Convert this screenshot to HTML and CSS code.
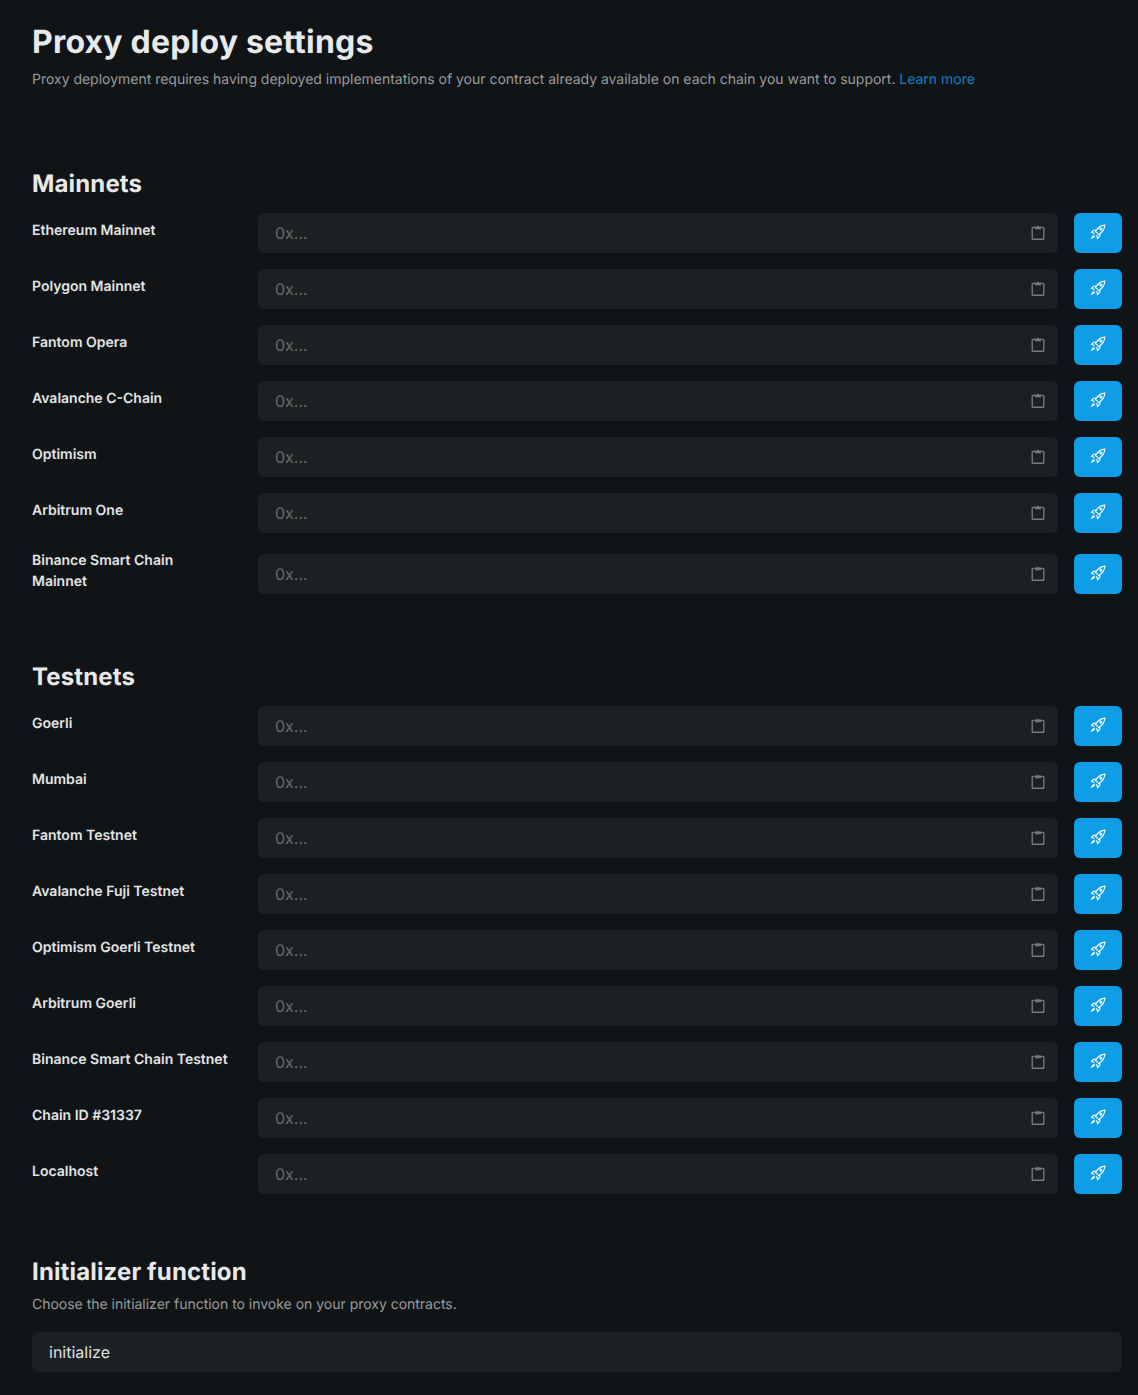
FILE: index.html
```html
<!DOCTYPE html>
<html lang="en">
<head>
<meta charset="utf-8">
<title>Proxy deploy settings</title>
<link rel="stylesheet" href="styles.css">
</head>
<body>
<svg class="defs" width="0" height="0" aria-hidden="true">
  <symbol id="clip" viewBox="0 0 16 16">
    <path d="M5 3.4H3a.8.8 0 0 0-.8.8v10.2a.8.8 0 0 0 .8.8h10a.8.8 0 0 0 .8-.8V4.2a.8.8 0 0 0-.8-.8h-2" fill="none" stroke="currentColor" stroke-width="1.4"/>
    <path d="M5 5.2V2.4h1.9a1.2 1.2 0 0 1 2.2 0H11v2.8z" fill="currentColor"/>
  </symbol>
  <symbol id="rocket" viewBox="0 0 16 16">
    <g fill="none" stroke="currentColor" stroke-width="1.1" stroke-linecap="round" stroke-linejoin="round">
      <path d="M14.9 1.1C11 1.4 8 3.4 5.4 7.2l3.4 3.4c3.8-2.6 5.8-5.6 6.1-9.5z"/>
      <path d="M6 6.2H3.6L1.4 8.4l3.1.9"/>
      <path d="M9.8 10v2.4l-2.2 2.2-.9-3.1"/>
      <path d="M3.6 11.4l-2 3 3-2z" fill="currentColor"/>
      <circle cx="10.8" cy="5.2" r=".9"/>
    </g>
  </symbol>
</svg>
<main class="page">
  <header class="intro">
    <h1 class="title">Proxy deploy settings</h1>
    <p class="note">Proxy deployment requires having deployed implementations of your contract already available on each chain you want to support. <a class="link" href="#">Learn more</a></p>
  </header>

  <section class="group group-main">
    <h2 class="heading">Mainnets</h2>
    <div class="rows">
      <div class="row"><label class="name">Ethereum Mainnet</label><div class="field"><input class="input" placeholder="0x..."><svg class="clip"><use href="#clip"/></svg></div><button class="deploy"><svg class="rocket"><use href="#rocket"/></svg></button></div>
      <div class="row"><label class="name">Polygon Mainnet</label><div class="field"><input class="input" placeholder="0x..."><svg class="clip"><use href="#clip"/></svg></div><button class="deploy"><svg class="rocket"><use href="#rocket"/></svg></button></div>
      <div class="row"><label class="name">Fantom Opera</label><div class="field"><input class="input" placeholder="0x..."><svg class="clip"><use href="#clip"/></svg></div><button class="deploy"><svg class="rocket"><use href="#rocket"/></svg></button></div>
      <div class="row"><label class="name">Avalanche C-Chain</label><div class="field"><input class="input" placeholder="0x..."><svg class="clip"><use href="#clip"/></svg></div><button class="deploy"><svg class="rocket"><use href="#rocket"/></svg></button></div>
      <div class="row"><label class="name">Optimism</label><div class="field"><input class="input" placeholder="0x..."><svg class="clip"><use href="#clip"/></svg></div><button class="deploy"><svg class="rocket"><use href="#rocket"/></svg></button></div>
      <div class="row"><label class="name">Arbitrum One</label><div class="field"><input class="input" placeholder="0x..."><svg class="clip"><use href="#clip"/></svg></div><button class="deploy"><svg class="rocket"><use href="#rocket"/></svg></button></div>
      <div class="row"><label class="name">Binance Smart Chain Mainnet</label><div class="field"><input class="input" placeholder="0x..."><svg class="clip"><use href="#clip"/></svg></div><button class="deploy"><svg class="rocket"><use href="#rocket"/></svg></button></div>
    </div>
  </section>

  <section class="group">
    <h2 class="heading">Testnets</h2>
    <div class="rows">
      <div class="row"><label class="name">Goerli</label><div class="field"><input class="input" placeholder="0x..."><svg class="clip"><use href="#clip"/></svg></div><button class="deploy"><svg class="rocket"><use href="#rocket"/></svg></button></div>
      <div class="row"><label class="name">Mumbai</label><div class="field"><input class="input" placeholder="0x..."><svg class="clip"><use href="#clip"/></svg></div><button class="deploy"><svg class="rocket"><use href="#rocket"/></svg></button></div>
      <div class="row"><label class="name">Fantom Testnet</label><div class="field"><input class="input" placeholder="0x..."><svg class="clip"><use href="#clip"/></svg></div><button class="deploy"><svg class="rocket"><use href="#rocket"/></svg></button></div>
      <div class="row"><label class="name">Avalanche Fuji Testnet</label><div class="field"><input class="input" placeholder="0x..."><svg class="clip"><use href="#clip"/></svg></div><button class="deploy"><svg class="rocket"><use href="#rocket"/></svg></button></div>
      <div class="row"><label class="name">Optimism Goerli Testnet</label><div class="field"><input class="input" placeholder="0x..."><svg class="clip"><use href="#clip"/></svg></div><button class="deploy"><svg class="rocket"><use href="#rocket"/></svg></button></div>
      <div class="row"><label class="name">Arbitrum Goerli</label><div class="field"><input class="input" placeholder="0x..."><svg class="clip"><use href="#clip"/></svg></div><button class="deploy"><svg class="rocket"><use href="#rocket"/></svg></button></div>
      <div class="row"><label class="name">Binance Smart Chain Testnet</label><div class="field"><input class="input" placeholder="0x..."><svg class="clip"><use href="#clip"/></svg></div><button class="deploy"><svg class="rocket"><use href="#rocket"/></svg></button></div>
      <div class="row"><label class="name">Chain ID #31337</label><div class="field"><input class="input" placeholder="0x..."><svg class="clip"><use href="#clip"/></svg></div><button class="deploy"><svg class="rocket"><use href="#rocket"/></svg></button></div>
      <div class="row"><label class="name">Localhost</label><div class="field"><input class="input" placeholder="0x..."><svg class="clip"><use href="#clip"/></svg></div><button class="deploy"><svg class="rocket"><use href="#rocket"/></svg></button></div>
    </div>
  </section>

  <section class="group group-last">
    <h2 class="heading heading-tight">Initializer function</h2>
    <p class="note note-init">Choose the initializer function to invoke on your proxy contracts.</p>
    <input class="input input-init" value="initialize">
  </section>
</main>
</body>
</html>
```

FILE: styles.css
```css
* { box-sizing: border-box; }
html, body { margin: 0; background: #101417; }
body { font-family: Inter, "Liberation Sans", sans-serif; color: #e8e9ea; text-rendering: geometricPrecision; }
.defs { position: absolute; }
.page { padding: 22px 16px 23px 32px; }
.intro { margin-bottom: 76px; }
.title { margin: 0; font-size: 32px; line-height: 40px; font-weight: 700; letter-spacing: .2px; color: #e8e9ea; }
.note { margin: 7px 0 0; font-size: 14px; line-height: 21px; letter-spacing: -.015px; color: #999b9d; }
.link { color: #0f7fc4; text-decoration: none; }
.group { margin-top: 60px; }
.group-main { margin-top: 0; }
.heading { margin: 0 0 11px; font-size: 24px; line-height: 36px; font-weight: 700; letter-spacing: .14px; color: #e8e9ea; }
.heading-tight { margin-bottom: 0; }
.rows { display: flex; flex-direction: column; gap: 16px; }
.row { display: flex; align-items: center; gap: 16px; }
.name { flex: 0 0 210px; margin-bottom: 7px; padding: 1px 12px 0 0; font-size: 14px; line-height: 21px; font-weight: 600; color: #e3e4e5; }
.field { position: relative; flex: 1; }
.input { display: block; width: 100%; height: 40px; padding: 0 17px; border: 0; border-radius: 6px; outline: 0; background: #1c2023; color: #dfe0e1; font: 400 16px Inter, "Liberation Sans", sans-serif; text-rendering: geometricPrecision; }
.input::placeholder { color: #666a6c; opacity: 1; }
.clip { position: absolute; top: 11px; right: 12px; width: 16px; height: 16px; color: #77797b; }
.deploy { flex: 0 0 48px; display: flex; align-items: center; justify-content: center; height: 40px; padding: 0; border: 0; border-radius: 6px; background: #0f9de8; color: #fff; }
.rocket { width: 16px; height: 16px; margin-top: -2px; }
.note-init { margin: 4px 0 17px; }
```
